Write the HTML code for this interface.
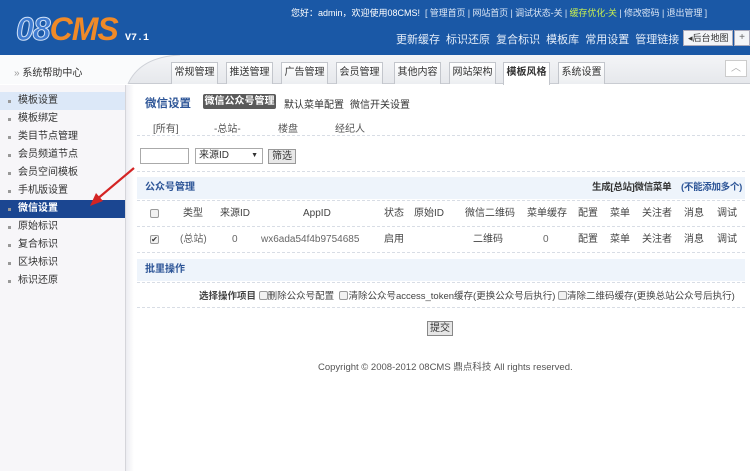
<!DOCTYPE html>
<html><head><meta charset="utf-8"><style>
*{margin:0;padding:0;box-sizing:border-box}
body{width:750px;height:471px;overflow:hidden;background:#fff;font-family:"Liberation Sans","Noto Sans CJK SC",sans-serif;font-size:10px;color:#333;position:relative}
.a{position:absolute;white-space:nowrap}
#hd{left:0;top:0;width:750px;height:55px;background:#1a58a6}
#tb{left:0;top:55px;width:750px;height:29px;background:linear-gradient(#f4f5f7,#e6e8ec);border-bottom:1px solid #c9ccd2}
.tab{position:absolute;top:62px;height:22px;border:1px solid #c3c6cc;border-bottom:none;background:linear-gradient(#fff,#eceef1);font-size:10px;line-height:20px;text-align:center;color:#333}
#sb{left:0;top:85px;width:126px;height:386px;background:#f7f6f9;border-right:1px solid #d5d5da}
#sb2{left:126px;top:85px;width:8px;height:386px;background:linear-gradient(90deg,#ececf1,#fff)}
.si{position:absolute;left:0;width:125px;height:18px;line-height:18px;padding-left:18px;font-size:10px;color:#333}
.si:before{content:"";position:absolute;left:8px;top:8px;width:3px;height:3px;background:#999}
.dash{position:absolute;border-top:1px dashed #d8dde5;left:137px;width:608px}
.sec{position:absolute;left:137px;width:608px;height:22px;background:#eef4fb;font-weight:bold;color:#2d5597;line-height:22px;padding-left:8px;font-size:10px}
.th{position:absolute;font-size:10px;color:#444;text-align:center;line-height:12px;height:12px}
.cb{position:absolute;width:9px;height:9px;border:1px solid #999;background:#f2f2f2;border-radius:2px}
</style></head><body>
<div id="hd" class="a"></div>
<div class="a" style="left:16px;top:14px;font-size:32px;font-weight:bold;font-style:italic;color:#f08a28;letter-spacing:-1px;line-height:30px"><span style="color:#3f7bd0;-webkit-text-stroke:1px #cfe0f7">08</span>CMS</div>
<div class="a" style="left:125px;top:33px;color:#fff;font-family:'Liberation Mono',monospace;font-size:10px;font-weight:bold">V7.1</div>
<div class="a" style="left:291px;top:6px;color:#fff;font-size:9px">您好：admin，欢迎使用08CMS!</div>
<div class="a" style="left:425px;top:6px;color:#dbe6f5;font-size:9px;letter-spacing:-0.1px">[ 管理首页 | 网站首页 | 调试状态-关 | <span style="color:#c8f050">缓存优化-关</span> | 修改密码 | 退出管理 ]</div>
<div class="a" style="left:396px;top:31px;color:#e3ecf8;font-size:11px;word-spacing:3px">更新缓存 标识还原 复合标识 模板库 常用设置 管理链接</div>
<div class="a" style="left:683px;top:30px;width:50px;height:16px;background:#f3f5f8;border:1px solid #aab;font-size:9px;line-height:14px;padding-left:4px;color:#333">◂后台地图</div>
<div class="a" style="left:734px;top:30px;width:16px;height:16px;background:#f3f5f8;border:1px solid #aab;font-size:10px;line-height:14px;text-align:center;color:#666">+</div>
<div id="tb" class="a"></div>
<svg class="a" style="left:0;top:55px" width="200" height="30"><path d="M0 0H180Q140 2 128 29H0Z" fill="#fafbfc"/><path d="M180 0Q140 2 128 29" stroke="#cfd2d8" fill="none"/></svg>
<div class="a" style="left:14px;top:64px;font-size:10px;color:#333"><span style="color:#999">»</span> 系统帮助中心</div>
<div class="tab" style="left:171px;width:47px">常规管理</div>
<div class="tab" style="left:226px;width:47px">推送管理</div>
<div class="tab" style="left:281px;width:47px">广告管理</div>
<div class="tab" style="left:336px;width:47px">会员管理</div>
<div class="tab" style="left:394px;width:47px">其他内容</div>
<div class="tab" style="left:449px;width:47px">网站架构</div>
<div class="tab" style="left:503px;width:47px;background:#fff;height:23px;font-weight:bold">模板风格</div>
<div class="tab" style="left:558px;width:47px">系统设置</div>
<div class="a" style="left:725px;top:60px;width:22px;height:17px;border:1px solid #ccc;background:#fff;color:#aaa;font-size:10px;text-align:center;line-height:15px">︿</div>
<div id="sb" class="a"></div><div id="sb2" class="a"></div>
<div class="si" style="top:92px;background:#dce8f8">模板设置</div>
<div class="si" style="top:110px">模板绑定</div>
<div class="si" style="top:128px">类目节点管理</div>
<div class="si" style="top:146px">会员频道节点</div>
<div class="si" style="top:164px">会员空间模板</div>
<div class="si" style="top:182px">手机版设置</div>
<div class="si" style="top:200px;background:#1b4691;color:#fff;font-weight:bold">微信设置</div>
<div class="si" style="top:218px">原始标识</div>
<div class="si" style="top:236px">复合标识</div>
<div class="si" style="top:254px">区块标识</div>
<div class="si" style="top:272px">标识还原</div>
<svg class="a" style="left:88px;top:164px" width="50" height="45"><line x1="46" y1="4" x2="8" y2="36" stroke="#d42424" stroke-width="2.2"/><path d="M2 42L8 29L15 37Z" fill="#d42424"/></svg>
<div class="a" style="left:145px;top:95px;font-size:11.5px;font-weight:bold;color:#2d5597">微信设置</div>
<div class="a" style="left:203px;top:94px;width:73px;height:15px;background:#5a5a5a;border-radius:2px;color:#fff;font-size:10px;font-weight:bold;line-height:15px;text-align:center">微信公众号管理</div>
<div class="a" style="left:284px;top:96px;font-size:10px;color:#333">默认菜单配置</div>
<div class="a" style="left:350px;top:96px;font-size:10px;color:#333">微信开关设置</div>
<div class="a" style="left:153px;top:120px;font-size:10px;color:#555">[所有]</div>
<div class="a" style="left:214px;top:120px;font-size:10px;color:#555">-总站-</div>
<div class="a" style="left:278px;top:120px;font-size:10px;color:#555">楼盘</div>
<div class="a" style="left:335px;top:120px;font-size:10px;color:#555">经纪人</div>
<div class="dash" style="top:135px"></div>
<div class="a" style="left:140px;top:148px;width:49px;height:16px;border:1px solid #aaa;background:#fff"></div>
<div class="a" style="left:195px;top:148px;width:68px;height:16px;border:1px solid #aaa;background:#fff;font-size:10px;line-height:14px;padding-left:3px">来源ID<span style="position:absolute;right:4px;font-size:7px">▼</span></div>
<div class="a" style="left:268px;top:149px;width:28px;height:15px;border:1px solid #999;background:#e8e8e8;font-size:10px;line-height:13px;text-align:center">筛选</div>
<div class="dash" style="top:171px"></div>
<div class="sec" style="top:177px">公众号管理</div>
<div class="a" style="left:592px;top:182px;font-size:9.5px;font-weight:bold;color:#333;letter-spacing:-0.3px;line-height:12px">生成[总站]微信菜单</div>
<div class="a" style="left:681px;top:182px;font-size:9.5px;font-weight:bold;color:#2d5597;letter-spacing:-0.3px;line-height:12px">(不能添加多个)</div>
<div class="dash" style="top:200px"></div>
<div class="cb" style="left:150px;top:209px"></div>
<div class="th" style="left:183px;top:208px">类型</div>
<div class="th" style="left:220px;top:208px">来源ID</div>
<div class="th" style="left:303px;top:208px">AppID</div>
<div class="th" style="left:384px;top:208px">状态</div>
<div class="th" style="left:414px;top:208px">原始ID</div>
<div class="th" style="left:465px;top:208px">微信二维码</div>
<div class="th" style="left:527px;top:208px">菜单缓存</div>
<div class="th" style="left:578px;top:208px">配置</div>
<div class="th" style="left:610px;top:208px">菜单</div>
<div class="th" style="left:642px;top:208px">关注者</div>
<div class="th" style="left:684px;top:208px">消息</div>
<div class="th" style="left:717px;top:208px">调试</div>
<div class="dash" style="top:226px"></div>
<div class="cb" style="left:150px;top:235px;font-size:8px;line-height:7px;text-align:center">✔</div>
<div class="th" style="left:180px;top:234px;color:#666">(总站)</div>
<div class="th" style="left:232px;top:234px;color:#666">0</div>
<div class="th" style="left:261px;top:234px;color:#666">wx6ada54f4b9754685</div>
<div class="th" style="left:384px;top:234px">启用</div>
<div class="th" style="left:473px;top:234px">二维码</div>
<div class="th" style="left:543px;top:234px;color:#666">0</div>
<div class="th" style="left:578px;top:234px">配置</div>
<div class="th" style="left:610px;top:234px">菜单</div>
<div class="th" style="left:642px;top:234px">关注者</div>
<div class="th" style="left:684px;top:234px">消息</div>
<div class="th" style="left:717px;top:234px">调试</div>
<div class="dash" style="top:252px"></div>
<div class="sec" style="top:259px">批里操作</div>
<div class="dash" style="top:282px"></div>
<div class="a" style="left:199px;top:290px;font-size:9.5px;color:#444;line-height:12px"><b>选择操作项目</b> <span class="cb" style="position:relative;display:inline-block;top:1px"></span>删除公众号配置 &nbsp;<span class="cb" style="position:relative;display:inline-block;top:1px"></span>清除公众号access_token缓存(更换公众号后执行) <span class="cb" style="position:relative;display:inline-block;top:1px"></span>清除二维码缓存(更换总站公众号后执行)</div>
<div class="dash" style="top:307px"></div>
<div class="a" style="left:427px;top:321px;width:26px;height:15px;border:1px solid #888;background:#e6e6e6;font-size:10px;line-height:13px;text-align:center">提交</div>
<div class="a" style="left:318px;top:359px;font-size:9.5px;color:#555">Copyright © 2008-2012 08CMS 鼎点科技 All rights reserved.</div>
</body></html>
